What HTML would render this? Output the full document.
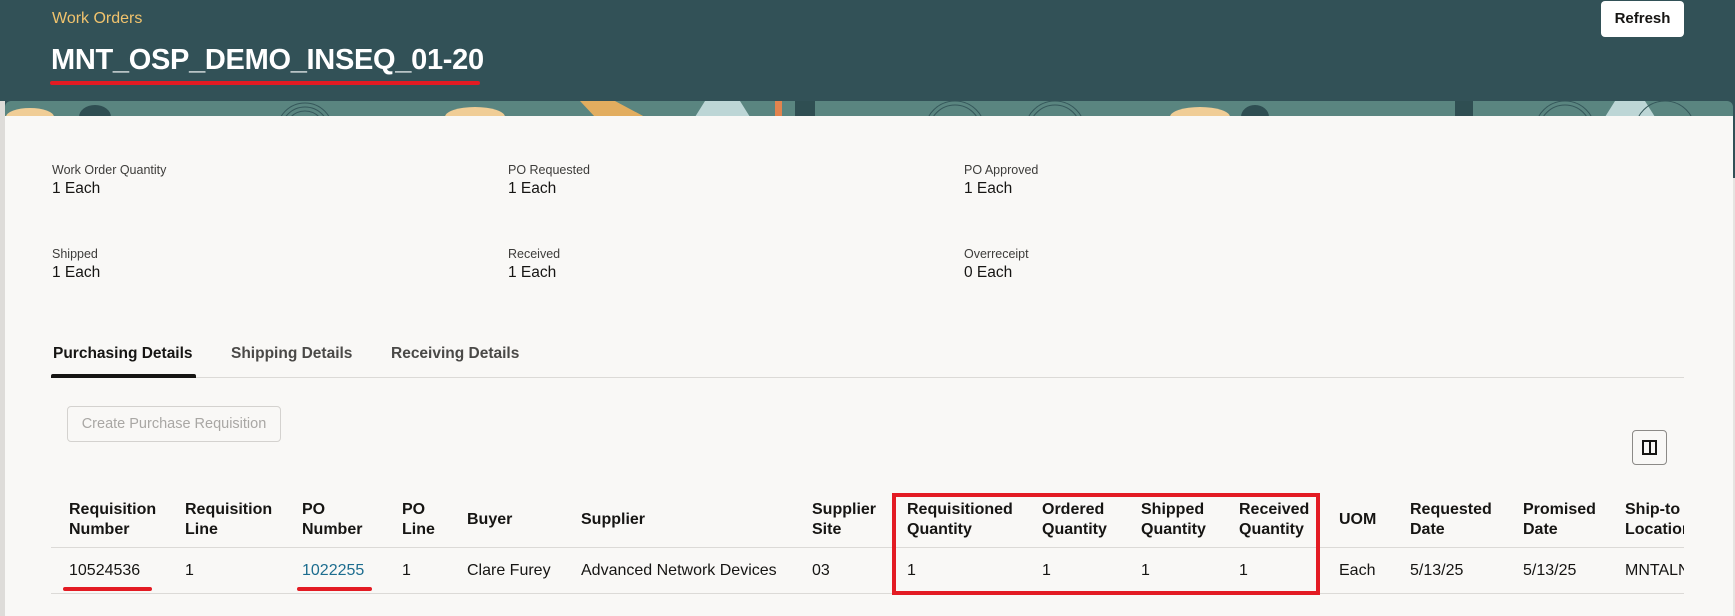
<!DOCTYPE html>
<html><head><meta charset="utf-8"><style>
*{margin:0;padding:0;box-sizing:border-box}
body{width:1735px;height:616px;overflow:hidden;background:#e6e4e1;font-family:"Liberation Sans",sans-serif;color:#161513;position:relative}
.a{position:absolute;white-space:nowrap}
.hdr{left:0;top:0;width:1735px;height:178px;background:#325157}
.band{left:5px;top:101px;width:1728px;height:16px;overflow:hidden;border-radius:6px 6px 0 0;background:#5a8580}
.card{left:5px;top:116px;width:1728px;height:500px;background:#f9f8f6}
.lbl{font-size:12.5px;color:#3d3c3a}
.val{font-size:15.5px}
.th{font-size:16px;font-weight:bold;line-height:20px;color:#161513}
.td{font-size:16px;top:562px}
.tab{font-size:15.5px;font-weight:bold;top:345px}
</style></head><body>
<div class="a hdr"></div>
<div class="a" style="left:0;top:101px;width:5px;height:77px;background:#dedcd9"></div>
<div class="a" style="left:52px;top:10px;font-size:16px;color:#f1c36d">Work Orders</div>
<div class="a" style="left:51px;top:44px;font-size:29px;font-weight:bold;color:#fff;letter-spacing:-0.3px">MNT_OSP_DEMO_INSEQ_01-20</div>
<div class="a" style="left:50px;top:81px;width:430px;height:4px;background:#e31b23;border-radius:2px"></div>
<div class="a" style="left:1601px;top:1px;width:83px;height:36px;background:#fff;border-radius:4px;font-size:15px;font-weight:bold;text-align:center;line-height:36px">Refresh</div>
<div class="a band"><svg width="1728" height="16">
<g fill="#f0cd96"><ellipse cx="25" cy="16" rx="24" ry="9"/><ellipse cx="470" cy="16" rx="30" ry="10"/><ellipse cx="1195" cy="16" rx="30" ry="10"/></g>
<g fill="#e2ad5f"><polygon points="575,0 610,0 640,16 590,16"/></g>
<g fill="#bdd6d6"><polygon points="700,0 735,0 745,16 690,16"/><polygon points="1610,0 1640,0 1650,16 1600,16"/></g>
<g fill="#2f4e52"><ellipse cx="90" cy="16" rx="16" ry="12"/><ellipse cx="1250" cy="16" rx="14" ry="12"/><rect x="790" y="0" width="20" height="16"/><rect x="1450" y="0" width="18" height="16"/></g>
<rect x="770" y="0" width="7" height="16" fill="#e3844e"/>
<g fill="none" stroke="#35575a" stroke-width="1"><circle cx="300" cy="30" r="28"/><circle cx="300" cy="30" r="24"/><circle cx="300" cy="30" r="20"/><circle cx="950" cy="30" r="30"/><circle cx="950" cy="30" r="26"/><circle cx="1050" cy="30" r="30"/><circle cx="1050" cy="30" r="26"/><circle cx="1560" cy="30" r="30"/><circle cx="1560" cy="30" r="26"/><circle cx="1660" cy="30" r="30"/></g>
</svg></div>
<div class="a card"></div>
<div class="a" style="left:0;top:178px;width:5px;height:438px;background:#dedcd9"></div>

<div class="a lbl" style="left:52px;top:163px">Work Order Quantity</div><div class="a val" style="left:52px;top:180px">1 Each</div>
<div class="a lbl" style="left:508px;top:163px">PO Requested</div><div class="a val" style="left:508px;top:180px">1 Each</div>
<div class="a lbl" style="left:964px;top:163px">PO Approved</div><div class="a val" style="left:964px;top:180px">1 Each</div>
<div class="a lbl" style="left:52px;top:247px">Shipped</div><div class="a val" style="left:52px;top:264px">1 Each</div>
<div class="a lbl" style="left:508px;top:247px">Received</div><div class="a val" style="left:508px;top:264px">1 Each</div>
<div class="a lbl" style="left:964px;top:247px">Overreceipt</div><div class="a val" style="left:964px;top:264px">0 Each</div>

<div class="a tab" style="left:53px">Purchasing Details</div>
<div class="a tab" style="left:231px;color:#4a4947">Shipping Details</div>
<div class="a tab" style="left:391px;color:#4a4947">Receiving Details</div>
<div class="a" style="left:51px;top:377px;width:1633px;height:1px;background:#dcdad7"></div>
<div class="a" style="left:51px;top:374px;width:145px;height:4px;background:#161513;border-radius:2px 2px 0 0"></div>

<div class="a" style="left:67px;top:406px;width:214px;height:36px;border:1px solid #d4d2cf;border-radius:4px;font-size:14.5px;color:#a9a7a4;text-align:center;line-height:34px">Create Purchase Requisition</div>
<div class="a" style="left:1632px;top:430px;width:35px;height:35px;border:1px solid #8c8a87;border-radius:4px"><div class="a" style="left:9px;top:9px;width:15px;height:15px;border:2px solid #161513"></div><div class="a" style="left:15.5px;top:9px;width:2px;height:15px;background:#161513"></div></div>

<div class="a th" style="left:69px;top:500px">Requisition<br>Number</div>
<div class="a th" style="left:185px;top:500px">Requisition<br>Line</div>
<div class="a th" style="left:302px;top:500px">PO<br>Number</div>
<div class="a th" style="left:402px;top:500px">PO<br>Line</div>
<div class="a th" style="left:467px;top:510px">Buyer</div>
<div class="a th" style="left:581px;top:510px">Supplier</div>
<div class="a th" style="left:812px;top:500px">Supplier<br>Site</div>
<div class="a th" style="left:907px;top:500px">Requisitioned<br>Quantity</div>
<div class="a th" style="left:1042px;top:500px">Ordered<br>Quantity</div>
<div class="a th" style="left:1141px;top:500px">Shipped<br>Quantity</div>
<div class="a th" style="left:1239px;top:500px">Received<br>Quantity</div>
<div class="a th" style="left:1339px;top:510px">UOM</div>
<div class="a th" style="left:1410px;top:500px">Requested<br>Date</div>
<div class="a th" style="left:1523px;top:500px">Promised<br>Date</div>
<div class="a th" style="left:1625px;top:500px;width:59px;overflow:hidden">Ship-to<br>Location</div>
<div class="a" style="left:51px;top:547px;width:1633px;height:1px;background:#dcdad7"></div>
<div class="a td" style="left:69px">10524536</div>
<div class="a td" style="left:185px">1</div>
<div class="a td" style="left:302px;color:#1d6d8f">1022255</div>
<div class="a td" style="left:402px">1</div>
<div class="a td" style="left:467px">Clare Furey</div>
<div class="a td" style="left:581px">Advanced Network Devices</div>
<div class="a td" style="left:812px">03</div>
<div class="a td" style="left:907px">1</div>
<div class="a td" style="left:1042px">1</div>
<div class="a td" style="left:1141px">1</div>
<div class="a td" style="left:1239px">1</div>
<div class="a td" style="left:1339px">Each</div>
<div class="a td" style="left:1410px">5/13/25</div>
<div class="a td" style="left:1523px">5/13/25</div>
<div class="a td" style="left:1625px;width:59px;overflow:hidden">MNTALN1</div>
<div class="a" style="left:51px;top:593px;width:1633px;height:1px;background:#dcdad7"></div>
<div class="a" style="left:892px;top:493px;width:428px;height:102px;border:4px solid #e31b23"></div>
<div class="a" style="left:63px;top:587px;width:89px;height:4px;background:#e31b23;border-radius:2px"></div>
<div class="a" style="left:297px;top:587px;width:75px;height:4px;background:#e31b23;border-radius:2px"></div>
</body></html>
